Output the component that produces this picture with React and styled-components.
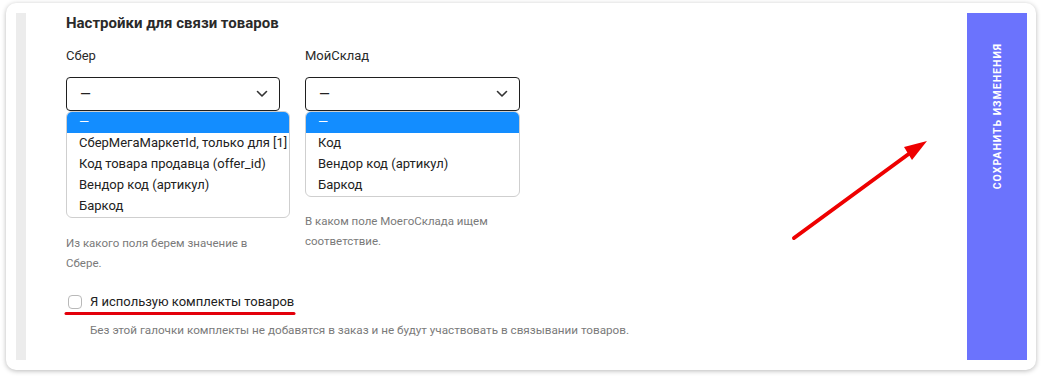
import React from "react";
import styled, { createGlobalStyle } from "styled-components";

const Global = createGlobalStyle`
  html, body { margin: 0; padding: 0; background: #fff; }
  body { font-family: Roboto, "Noto Sans", sans-serif; color: #222; }
  * { box-sizing: border-box; }
`;

const Page = styled.div`
  position: relative;
  width: 1043px;
  height: 379px;
  padding: 3px 7px 9px 6px;
`;

const Card = styled.div`
  display: flex;
  height: 367px;
  padding: 10px 9px 10px 10px;
  background: #fff;
  border-radius: 10px;
  box-shadow: 0 1px 5px rgba(0, 0, 0, 0.28);
`;

const Strip = styled.div`
  width: 10px;
  background: #ececec;
  flex: none;
`;

const Content = styled.div`
  flex: 1;
  padding: 0 0 0 40px;
  display: flex;
  flex-direction: column;
`;

const Title = styled.h3`
  margin: 0;
  font-size: 15px;
  line-height: 20px;
  font-weight: 700;
  color: #2a2a2a;
`;

const Columns = styled.div`
  display: flex;
  gap: 25px;
  margin-top: 14px;
  align-items: flex-start;
`;

const Column = styled.div`
  width: ${(p) => p.$w}px;
  display: flex;
  flex-direction: column;
`;

const Label = styled.div`
  font-size: 13px;
  line-height: 18px;
  color: #2a2a2a;
  margin-bottom: 12px;
`;

const SelectBox = styled.div`
  height: 34px;
  border: 1px solid #1f1f1f;
  border-radius: 4px;
  display: flex;
  align-items: center;
  justify-content: space-between;
  padding: 0 11px 0 13px;
  font-size: 14px;
  color: #222;
`;

const List = styled.div`
  width: ${(p) => p.$w};
  border: 1px solid #cfcfcf;
  border-radius: 6px;
  overflow: hidden;
  background: #fff;
`;

const Item = styled.div`
  height: 21px;
  line-height: 20px;
  padding-left: 12px;
  font-size: 13px;
  white-space: nowrap;
  color: ${(p) => (p.$active ? "#fff" : "#222")};
  background: ${(p) => (p.$active ? "#138dff" : "transparent")};
`;

const Help = styled.div`
  margin-top: ${(p) => p.$mt}px;
  font-size: 11.5px;
  line-height: 20px;
  color: #7a7a7a;
`;

const CheckRow = styled.label`
  display: flex;
  align-items: center;
  gap: 8px;
  margin-top: 20px;
  margin-left: 2px;
  font-size: 13px;
  line-height: 18px;
  color: #222;
`;

const Box = styled.span`
  width: 14px;
  height: 14px;
  border: 1px solid #b9b9b9;
  border-radius: 4px;
  background: #fff;
`;

const CheckHelp = styled.div`
  margin: 11px 0 0 24px;
  font-size: 11.7px;
  line-height: 16px;
  color: #7a7a7a;
`;

const SaveButton = styled.button`
  width: 60px;
  flex: none;
  border: none;
  background: #6b73fd;
  color: #fff;
  display: flex;
  justify-content: center;
  align-items: flex-start;
  padding: 30px 0 0;
  cursor: pointer;
`;

const SaveText = styled.span`
  writing-mode: vertical-rl;
  transform: rotate(180deg);
  font-family: Roboto, sans-serif;
  font-size: 10.5px;
  font-weight: 700;
  letter-spacing: 1px;
  text-transform: uppercase;
`;

const Overlay = styled.svg`
  position: absolute;
  left: 0;
  top: 0;
  pointer-events: none;
`;

const Chevron = () => (
  <svg width="12" height="8" viewBox="0 0 12 8">
    <path d="M1.5 1.5 L6 6 L10.5 1.5" fill="none" stroke="#333" strokeWidth="1.6" strokeLinecap="round" strokeLinejoin="round" />
  </svg>
);

export default function App() {
  return (
    <Page>
      <Global />
      <Card>
        <Strip />
        <Content>
          <Title>Настройки для связи товаров</Title>
          <Columns>
            <Column $w={214}>
              <Label>Сбер</Label>
              <SelectBox>
                <span>—</span>
                <Chevron />
              </SelectBox>
              <List $w="224px">
                <Item $active>—</Item>
                <Item>СберМегаМаркетId, только для [1]</Item>
                <Item>Код товара продавца (offer_id)</Item>
                <Item>Вендор код (артикул)</Item>
                <Item>Баркод</Item>
              </List>
              <Help $mt={15}>Из какого поля берем значение в Сбере.</Help>
            </Column>
            <Column $w={215}>
              <Label>МойСклад</Label>
              <SelectBox>
                <span>—</span>
                <Chevron />
              </SelectBox>
              <List $w="100%">
                <Item $active>—</Item>
                <Item>Код</Item>
                <Item>Вендор код (артикул)</Item>
                <Item>Баркод</Item>
              </List>
              <Help $mt={14}>В каком поле МоегоСклада ищем соответствие.</Help>
            </Column>
          </Columns>
          <CheckRow>
            <Box />
            <span>Я использую комплекты товаров</span>
          </CheckRow>
          <CheckHelp>Без этой галочки комплекты не добавятся в заказ и не будут участвовать в связывании товаров.</CheckHelp>
        </Content>
        <SaveButton>
          <SaveText>Сохранить изменения</SaveText>
        </SaveButton>
      </Card>
      <Overlay width="1043" height="379" viewBox="0 0 1043 379">
        <line x1="66" y1="313.5" x2="294" y2="313.5" stroke="#e3000b" strokeWidth="3" strokeLinecap="round" />
        <line x1="794" y1="238" x2="910" y2="153" stroke="#ee0000" strokeWidth="4" strokeLinecap="round" />
        <polygon points="927,141 904,147 912,160" fill="#ee0000" />
      </Overlay>
    </Page>
  );
}
